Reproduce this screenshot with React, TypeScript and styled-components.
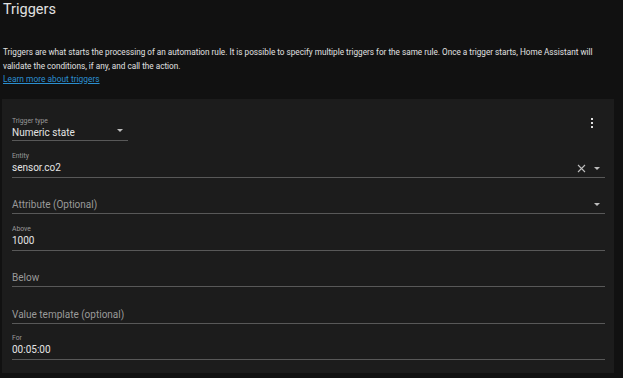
import React from "react";
import styled, { createGlobalStyle } from "styled-components";

const GlobalStyle = createGlobalStyle`
  html, body {
    margin: 0;
    padding: 0;
    background: #111111;
  }
  body {
    font-family: Roboto, "Liberation Sans", sans-serif;
    color: #e1e1e1;
  }
`;

const Page = styled.div`
  width: 623px;
  height: 378px;
  overflow: hidden;
  background: #111111;
`;

const Header = styled.div`
  padding: 0 0 0 3px;
`;

const Title = styled.h1`
  margin: 0;
  font-size: 14.5px;
  font-weight: 400;
  line-height: 20px;
  color: #e1e1e1;
`;

const Description = styled.p`
  margin: 26px 0 0;
  max-width: 606px;
  font-size: 8.2px;
  line-height: 13.5px;
  color: #e1e1e1;
`;

const LearnLink = styled.a`
  display: block;
  font-size: 8.4px;
  line-height: 13px;
  color: #2b8fd0;
  text-decoration: underline;
`;

const Card = styled.div`
  margin: 13px 0 0 2px;
  width: 612px;
  box-sizing: border-box;
  padding: 14px 9px 13px 10px;
  background: #1c1c1c;
  display: flex;
  flex-direction: column;
  gap: 8.4px;
`;

const TopRow = styled.div`
  display: flex;
  justify-content: space-between;
  align-items: flex-start;
  margin-bottom: 0.6px;
`;

const Field = styled.div<{ $width?: number; $shift?: number }>`
  height: 28px;
  box-sizing: border-box;
  padding-top: ${(p) => p.$shift ?? 0}px;
  width: ${(p) => (p.$width ? `${p.$width}px` : "100%")};
  border-bottom: 1px solid #585858;
  display: flex;
  align-items: flex-start;
`;

const FieldBody = styled.div`
  flex: 1;
  min-width: 0;
  display: flex;
  flex-direction: column;
`;

const Label = styled.span`
  font-size: 6.8px;
  line-height: 12px;
  color: #9a9a9a;
`;

const Value = styled.span`
  font-size: 10px;
  line-height: 12px;
  color: #e4e4e4;
`;

const Placeholder = styled.span`
  padding-top: 13px;
  font-size: 10px;
  line-height: 12px;
  color: #9a9a9a;
`;

const Icons = styled.div<{ $top: number }>`
  display: flex;
  align-items: center;
  gap: 8px;
  padding-top: ${(p) => p.$top}px;
  padding-right: 5px;
`;

const Arrow = styled.span`
  width: 0;
  height: 0;
  border-left: 3px solid transparent;
  border-right: 3px solid transparent;
  border-top: 3px solid #bdbdbd;
`;

const MenuButton = styled.div`
  margin: 5px 12px 0 0;
  display: flex;
  flex-direction: column;
  gap: 2px;
`;

const Dot = styled.span`
  width: 2px;
  height: 2px;
  background: #e0e0e0;
`;

const ClearIcon = () => (
  <svg width="9" height="9" viewBox="0 0 9 9">
    <path d="M1 1 L8 8 M8 1 L1 8" stroke="#bdbdbd" strokeWidth="1.1" fill="none" />
  </svg>
);

interface FieldProps {
  label: string;
  value?: string;
  width?: number;
  shift?: number;
  arrow?: boolean;
  clear?: boolean;
}

const TextField: React.FC<FieldProps> = ({ label, value, width, shift, arrow, clear }) => (
  <Field $width={width} $shift={shift}>
    <FieldBody>
      {value !== undefined ? (
        <>
          <Label>{label}</Label>
          <Value>{value}</Value>
        </>
      ) : (
        <Placeholder>{label}</Placeholder>
      )}
    </FieldBody>
    {(arrow || clear) && (
      <Icons $top={value !== undefined ? 14 : 17}>
        {clear && <ClearIcon />}
        {arrow && <Arrow />}
      </Icons>
    )}
  </Field>
);

export default function App() {
  return (
    <Page>
      <GlobalStyle />
      <Header>
        <Title>Triggers</Title>
        <Description>
          Triggers are what starts the processing of an automation rule. It is possible to specify multiple triggers for
          the same rule. Once a trigger starts, Home Assistant will validate the conditions, if any, and call the action.
        </Description>
        <LearnLink>Learn more about triggers</LearnLink>
      </Header>
      <Card>
        <TopRow>
          <TextField label="Trigger type" value="Numeric state" width={116} shift={2} arrow />
          <MenuButton>
            <Dot />
            <Dot />
            <Dot />
          </MenuButton>
        </TopRow>
        <TextField label="Entity" value="sensor.co2" clear arrow />
        <TextField label="Attribute (Optional)" arrow />
        <TextField label="Above" value="1000" />
        <TextField label="Below" />
        <TextField label="Value template (optional)" />
        <TextField label="For" value="00:05:00" />
      </Card>
    </Page>
  );
}
